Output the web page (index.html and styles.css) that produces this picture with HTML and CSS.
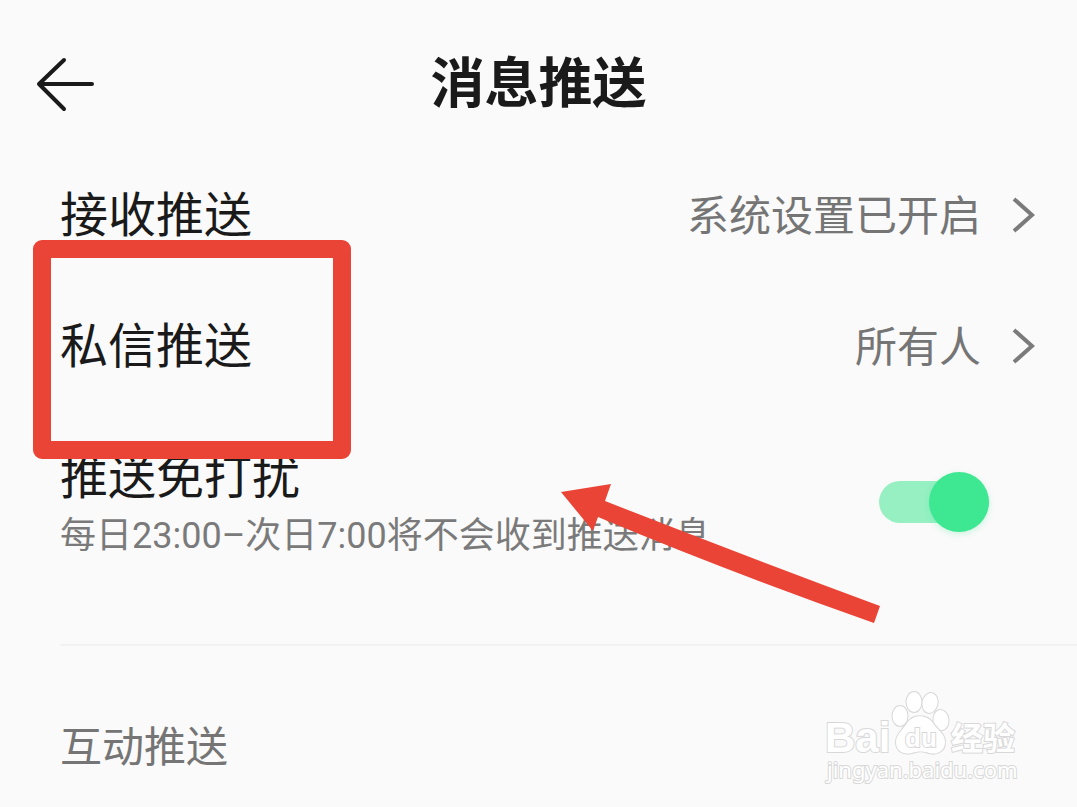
FILE: index.html
```html
<!DOCTYPE html>
<html lang="zh-CN">
<head>
<meta charset="utf-8">
<meta name="viewport" content="width=device-width, initial-scale=1">
<title>消息推送</title>
<link rel="stylesheet" href="styles.css">
</head>
<body>
<div class="page">
  <header class="header">
    <button class="back" type="button" aria-label="返回">
      <svg width="60" height="56" viewBox="0 0 60 56" fill="none" stroke="currentColor" stroke-width="4" stroke-linecap="round" stroke-linejoin="round"><path d="M30 4 5 28l25 25M5 28h53"/></svg>
    </button>
    <h1 class="title">消息推送</h1>
  </header>
  <main>
    <a class="row" href="#receive">
      <span class="label">接收推送</span>
      <span class="value">系统设置已开启</span>
      <svg class="chevron" width="24" height="38" viewBox="0 0 24 38"><path d="m3 2 18 16L3 34"/></svg>
    </a>
    <a class="row" href="#private">
      <span class="label">私信推送</span>
      <span class="value">所有人</span>
      <svg class="chevron" width="24" height="38" viewBox="0 0 24 38"><path d="m3 2 18 16L3 34"/></svg>
    </a>
    <div class="quiet">
      <label class="quiet-text" for="quiet">
        <span class="label">推送免打扰</span>
        <span class="hint">每日23:00–次日7:00将不会收到推送消息</span>
      </label>
      <input class="switch" id="quiet" type="checkbox" role="switch" checked>
    </div>
    <h2 class="section">互动推送</h2>
  </main>
  <div class="highlight"></div>
  <svg class="pointer" width="322" height="142" viewBox="0 0 322 142"><path fill="#ea4436" d="M1 8 51 0l-6 17Q180 70 320 122l-6 17Q164 86 38 33l-5 14Z"/></svg>
  <svg class="watermark" width="204" height="100" viewBox="0 0 204 100">
    <text class="brand" x="6" y="64" font-size="42">Bai</text>
    <g class="paw">
      <ellipse cx="81" cy="28" rx="7.5" ry="10"/>
      <ellipse cx="95" cy="14" rx="7.5" ry="10"/>
      <ellipse cx="111" cy="15" rx="7.5" ry="10" transform="rotate(12 111 15)"/>
      <ellipse cx="122" cy="32" rx="7.5" ry="10" transform="rotate(-8 122 32)"/>
      <path d="M88 35c6-9 20-9 26 0 4 7 12 10 12 19 0 10-9 13-16 11-5-2-12-2-17 0-9 2-16-2-16-11 0-8 7-12 11-19Z"/>
    </g>
    <text class="brand du" x="86" y="59" font-size="26">du</text>
    <text class="brand brand-cn" x="132" y="62" font-size="32">经验</text>
    <text class="domain" x="8" y="90" font-size="22">jingyan.baidu.com</text>
  </svg>
</div>
</body>
</html>
```
FILE: styles.css
```css
* { box-sizing: border-box; }

body {
  margin: 0;
  background: #fafafa;
  color: #1a1a1a;
  font-family: Roboto, "Noto Sans CJK SC", sans-serif;
}

.page {
  position: relative;
  min-height: 100vh;
  overflow: hidden;
}

.header {
  display: grid;
  grid-template-columns: 60px 1fr 60px;
  align-items: center;
  height: 150px;
  padding: 0 34px;
}

.back {
  padding: 18px 0 0;
  border: 0;
  background: none;
  color: inherit;
}

.back svg, .chevron { display: block; }

.title {
  margin: 0;
  padding-top: 20px;
  font-size: 54px;
  line-height: 64px;
  font-weight: 700;
  text-align: center;
}

.row {
  display: flex;
  align-items: center;
  height: 131px;
  padding: 0 42px 0 60px;
  color: inherit;
  text-decoration: none;
}

.label {
  flex: 1;
  font-size: 48px;
  line-height: 64px;
}

.value {
  margin-right: 30px;
  padding-top: 2px;
  color: #757575;
  font-size: 42px;
  line-height: 64px;
}

.chevron {
  fill: none;
  stroke: #7b7b7b;
  stroke-width: 4;
}

.quiet {
  display: flex;
  align-items: center;
  justify-content: space-between;
  height: 180px;
  padding: 0 88px 0 60px;
}

.quiet-text {
  display: flex;
  flex-direction: column;
  padding-top: 4px;
}

.hint {
  color: #7a7a7a;
  font-size: 36px;
  line-height: 52px;
}

.switch {
  appearance: none;
  display: flex;
  align-items: center;
  justify-content: flex-end;
  width: 110px;
  height: 42px;
  margin: 0;
  border-radius: 21px;
  background: #96f0c2;
}

.switch::before {
  content: "";
  width: 60px;
  height: 60px;
  flex: none;
  border-radius: 50%;
  background: #3ee792;
  box-shadow: 0 2px 6px #3ee79240;
}

.section {
  margin: 52px 0 0 60px;
  padding-top: 70px;
  border-top: 2px solid #f2f2f2;
  color: #757575;
  font-size: 42px;
  line-height: 64px;
  font-weight: 400;
}

.highlight {
  position: absolute;
  top: 240px;
  left: 33px;
  width: 318px;
  height: 219px;
  border: 18px solid #ea4436;
  border-radius: 9px;
}

.pointer {
  position: absolute;
  top: 484px;
  left: 560px;
}

.watermark {
  position: absolute;
  right: 54px;
  bottom: 19px;
}

.watermark text, .paw {
  fill: #fff;
  stroke: #d8d8d8;
  stroke-width: 2;
  paint-order: stroke;
}

.brand {
  font-family: "Liberation Sans", sans-serif;
  font-weight: 700;
}

.watermark .brand-cn {
  font-family: "Noto Sans CJK SC", sans-serif;
}

.domain { font-family: "Noto Sans", sans-serif; }
```
